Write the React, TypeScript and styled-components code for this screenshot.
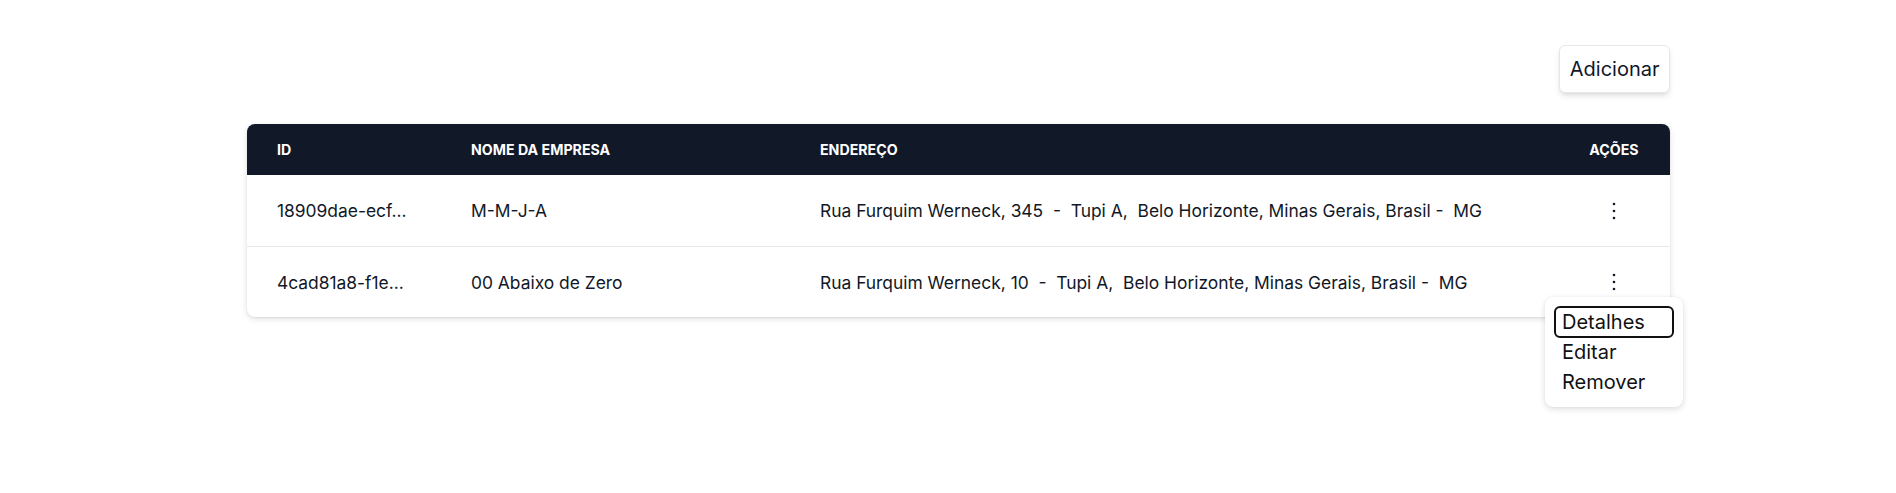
import React from "react";
import styled, { createGlobalStyle } from "styled-components";

const Global = createGlobalStyle`
  html, body { margin: 0; padding: 0; background: #ffffff; }
  body { font-family: Inter, "Noto Sans", sans-serif; color: #111827; }
  * { box-sizing: border-box; }
`;

const Page = styled.main`
  width: 1896px;
  height: 493px;
  padding: 45px 226px 0 247px;
  display: flex;
  flex-direction: column;
  gap: 31px;
`;

const Toolbar = styled.div`
  display: flex;
  justify-content: flex-end;
`;

const AddButton = styled.button`
  height: 48px;
  padding: 0 9.5px;
  font-family: Inter, sans-serif;
  font-size: 20px;
  color: #0f172a;
  background: #fff;
  border: 1px solid #e5e7eb;
  border-radius: 6px;
  box-shadow: 0 4px 6px -1px rgba(0, 0, 0, 0.1), 0 2px 4px -2px rgba(0, 0, 0, 0.1);
  cursor: pointer;
`;

const Table = styled.div`
  border-radius: 8px;
  background: #fff;
  box-shadow: 0 2px 6px rgba(0, 0, 0, 0.12), 0 1px 2px rgba(0, 0, 0, 0.06);
`;

const Row = styled.div<{ $head?: boolean; $last?: boolean }>`
  display: grid;
  grid-template-columns: 194px 349px 1fr 52px;
  align-items: center;
  padding: 0 30px;
  height: ${(p) => (p.$head ? "51px" : p.$last ? "70px" : "72px")};
  background: ${(p) => (p.$head ? "#111827" : "transparent")};
  border-radius: ${(p) => (p.$head ? "8px 8px 0 0" : "0")};
  border-bottom: ${(p) => (p.$head || p.$last ? "none" : "1px solid #e5e7eb")};
`;

const HeadCell = styled.div<{ $center?: boolean }>`
  color: #ffffff;
  font-size: 14.2px;
  font-weight: 700;
  text-transform: uppercase;
  white-space: nowrap;
  display: flex;
  justify-content: ${(p) => (p.$center ? "center" : "flex-start")};
`;

const Cell = styled.div<{ $pre?: boolean }>`
  font-size: 17.4px;
  color: #111827;
  white-space: ${(p) => (p.$pre ? "pre" : "nowrap")};
`;

const ActionCell = styled.div`
  position: relative;
  display: flex;
  justify-content: center;
`;

const KebabButton = styled.button`
  width: 24px;
  height: 24px;
  padding: 0;
  border: none;
  background: transparent;
  display: flex;
  align-items: center;
  justify-content: center;
  cursor: pointer;
  color: #111827;
`;

const MenuPanel = styled.div`
  position: absolute;
  top: 27px;
  left: -43px;
  width: 138px;
  padding: 10px;
  background: #fff;
  border-radius: 8px;
  box-shadow: 0 2px 6px rgba(0, 0, 0, 0.14), 0 0 1px rgba(0, 0, 0, 0.08);
  z-index: 10;
`;

const MenuItem = styled.div<{ $focused?: boolean }>`
  font-size: 20px;
  line-height: 30px;
  padding: 0 7px;
  color: #111111;
  border-radius: 5px;
  outline: ${(p) => (p.$focused ? "2px solid #111111" : "none")};
  outline-offset: -1px;
  cursor: pointer;
`;

const Kebab = () => (
  <svg width="24" height="24" viewBox="0 0 24 24" fill="currentColor">
    <circle cx="12" cy="5" r="1.3" />
    <circle cx="12" cy="12" r="1.3" />
    <circle cx="12" cy="19" r="1.3" />
  </svg>
);

const companies = [
  {
    id: "18909dae-ecf...",
    name: "M-M-J-A",
    address: "Rua Furquim Werneck, 345  -  Tupi A,  Belo Horizonte, Minas Gerais, Brasil -  MG",
  },
  {
    id: "4cad81a8-f1e...",
    name: "00 Abaixo de Zero",
    address: "Rua Furquim Werneck, 10  -  Tupi A,  Belo Horizonte, Minas Gerais, Brasil -  MG",
  },
];

export default function App() {
  return (
    <>
      <Global />
      <Page>
        <Toolbar>
          <AddButton>Adicionar</AddButton>
        </Toolbar>
        <Table>
          <Row $head>
            <HeadCell>ID</HeadCell>
            <HeadCell>Nome da Empresa</HeadCell>
            <HeadCell>Endereço</HeadCell>
            <HeadCell $center>Ações</HeadCell>
          </Row>
          {companies.map((c, i) => (
            <Row key={c.id} $last={i === companies.length - 1}>
              <Cell>{c.id}</Cell>
              <Cell>{c.name}</Cell>
              <Cell $pre>{c.address}</Cell>
              <ActionCell>
                <KebabButton aria-label="Ações">
                  <Kebab />
                </KebabButton>
                {i === 1 && (
                  <MenuPanel role="menu">
                    <MenuItem $focused>Detalhes</MenuItem>
                    <MenuItem>Editar</MenuItem>
                    <MenuItem>Remover</MenuItem>
                  </MenuPanel>
                )}
              </ActionCell>
            </Row>
          ))}
        </Table>
      </Page>
    </>
  );
}
